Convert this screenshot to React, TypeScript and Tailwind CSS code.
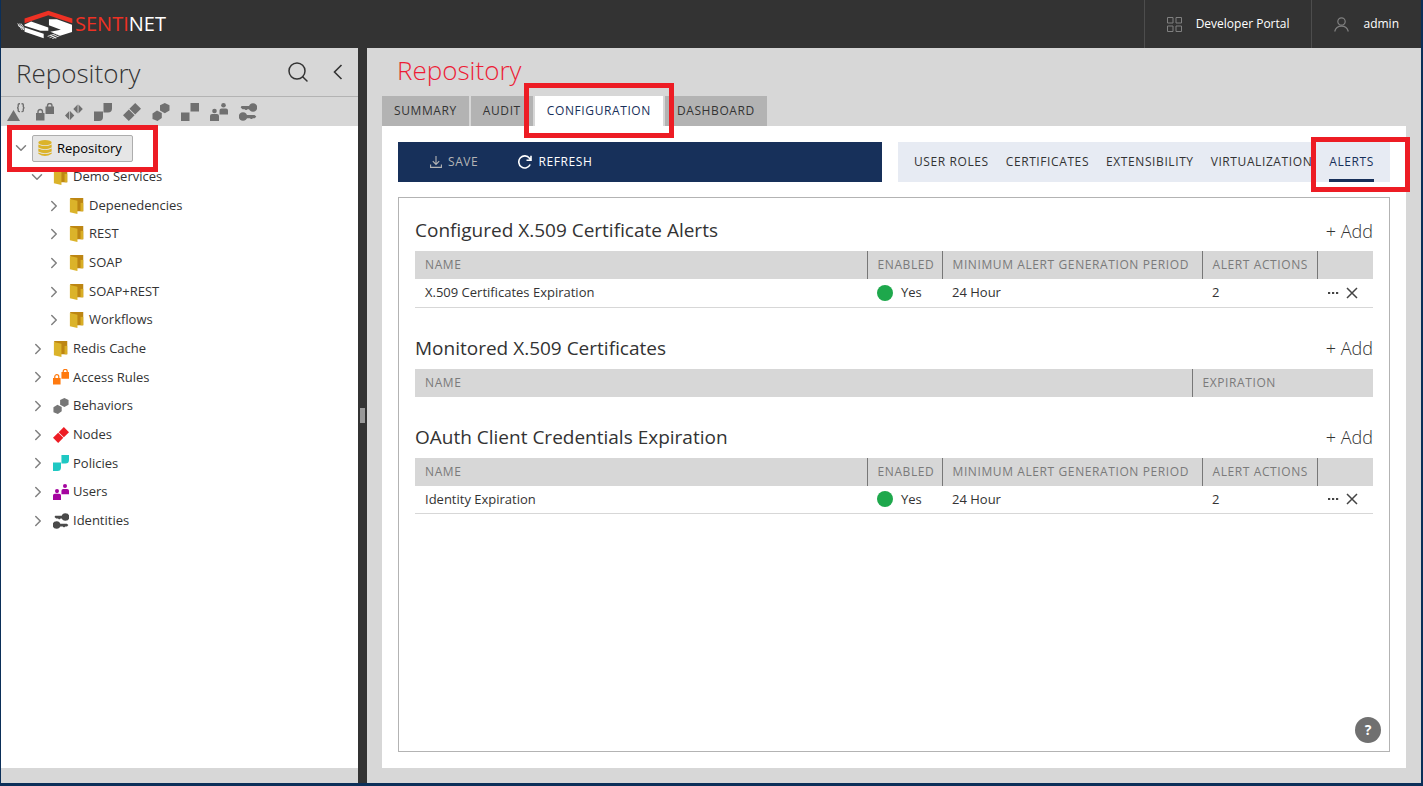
import type { ReactNode } from 'react'
import { ChevronDown, ChevronRight, Search } from 'lucide-react'

type IconName =
  | 'api'
  | 'locks'
  | 'arrows'
  | 'policies'
  | 'nodes'
  | 'behaviors'
  | 'squares'
  | 'users'
  | 'keys'
  | 'folder'
  | 'database'

const shapes: Record<IconName, ReactNode> = {
  api: (
    <>
      <path d="M0 18 6.5 7 13 18Z" />
      <path
        d="M13 .8h-.8q-1 0-1 1v1.7q0 1.2-1.2 1.2 1.2 0 1.2 1.2v1.7q0 1 1 1h.8M14.5.8h.8q1 0 1 1v1.7q0 1.2 1.2 1.2-1.2 0-1.2 1.2v1.7q0 1-1 1h-.8"
        fill="none"
        stroke="currentColor"
        strokeWidth="1.4"
      />
    </>
  ),
  locks: (
    <>
      <path d="M0 10h8.5v7.5H0zM9.5 3.5H18V11H9.5z" />
      <path
        d="M2 10.5V8.7a2.25 2.25 0 0 1 4.5 0v1.8M11.5 4V2.7a2.25 2.25 0 0 1 4.5 0V4"
        fill="none"
        stroke="currentColor"
        strokeWidth="1.4"
      />
    </>
  ),
  arrows: <path d="M0 12.5 4.3 8v9zM5 8l4.3 4.5L5 17zM8.3 6l4.3-4.5v9zM13.5 1.5 17.8 6l-4.3 4.5z" />,
  policies: <path d="M0 8.5h9V14q0 4-4 4H0zM9.5 0H18v5.5q0 4-4 4H9.5z" />,
  nodes: <path d="M5.8 6.4 11.6 12.2 5.8 18 0 12.2zM12.2 0 18 5.8 12.2 11.6 6.4 5.8z" />,
  behaviors: (
    <path d="m5 7.5 4.8 2.5v5L5.5 18l-5-2v-5.5zM12.800 0 17.500 2.300v5.200l-4.700 2.700L8 7.500V2.300z" />
  ),
  squares: <path d="M0 9.5h8.5V18H0zM9.5 0H18v8.5H9.5z" />,
  users: (
    <>
      <circle cx="4.5" cy="8" r="2.3" />
      <circle cx="13.5" cy="2.3" r="2.3" />
      <path d="M0 18v-5q0-2 2-2h5q2 0 2 2v5zM9.5 11.5v-4q0-2 2-2H16q2 0 2 2v4z" />
    </>
  ),
  keys: (
    <>
      <circle cx="14" cy="4.5" r="4.3" />
      <circle cx="4" cy="13.5" r="4.3" />
      <path d="M2.5 3H11v3.2H8.5L7.7 7H6.5l-.8-.8H3.5L1.7 4.6zM7 12h8.5l1.8 1.5-1.5 1.7h-2l-.8.8h-1.2l-.8-.8H7z" />
    </>
  ),
  folder: (
    <>
      <path d="M1 0h15v15H9z" fill="#bd8613" />
      <path d="M13 5.5h3V15h-3z" fill="#d9ae25" />
      <path d="M1 1 9.500 3v15L1 16z" fill="#dbb32a" />
    </>
  ),
  database: (
    <>
      <ellipse cx="9" cy="3" rx="7.5" ry="3" />
      <path d="M1.5 5q7.5 3.6 15 0v3.5q-7.5 3.6-15 0zM1.5 9.5q7.5 3.6 15 0V13q-7.5 3.6-15 0zM1.5 14q7.5 3.6 15 0v1.5q-7.5 5-15 0z" />
    </>
  ),
}

function Glyph({ name, className }: { name: IconName; className: string }) {
  return (
    <svg viewBox="0 0 18 18" fill="currentColor" className={`shrink-0 ${className}`} aria-hidden="true">
      {shapes[name]}
    </svg>
  )
}

function Logo() {
  return (
    <svg viewBox="0 0 168 88" className="h-[29px] w-14" aria-hidden="true">
      <path d="M22 26 94 2l73 24v14L94 16 22 40Z" fill="#ee3124" />
      <g fill="#fff">
        <path d="m22 44 20-9 52 18v10H70L22 48z" />
        <path d="m22 53 58 19v14L22 66z" />
        <path d="M96 28h24l46 17v22l-36 11-30-12 32-6-36-14z" />
      </g>
      <path
        d="m1 41 14 20M6 41l14 20M11 41l9 13M2 47l18 9M92 80l24-8M98 84l24-9M106 87l22-9M100 76l18 10"
        stroke="#fff"
        strokeWidth="2.5"
      />
    </svg>
  )
}

const toolbar: { name: IconName; label: string }[] = [
  { name: 'api', label: 'Add service' },
  { name: 'locks', label: 'Add access rule' },
  { name: 'arrows', label: 'Add version' },
  { name: 'policies', label: 'Add policy' },
  { name: 'nodes', label: 'Add node' },
  { name: 'behaviors', label: 'Add behavior' },
  { name: 'squares', label: 'Add group' },
  { name: 'users', label: 'Add user' },
  { name: 'keys', label: 'Add identity' },
]

type TreeNode = {
  label: string
  indent: string
  icon: IconName
  color: string
  open?: boolean
}

const tree: TreeNode[] = [
  { label: 'Demo Services', indent: 'pl-7', icon: 'folder', color: '', open: true },
  { label: 'Depenedencies', indent: 'pl-11', icon: 'folder', color: '' },
  { label: 'REST', indent: 'pl-11', icon: 'folder', color: '' },
  { label: 'SOAP', indent: 'pl-11', icon: 'folder', color: '' },
  { label: 'SOAP+REST', indent: 'pl-11', icon: 'folder', color: '' },
  { label: 'Workflows', indent: 'pl-11', icon: 'folder', color: '' },
  { label: 'Redis Cache', indent: 'pl-7', icon: 'folder', color: '' },
  { label: 'Access Rules', indent: 'pl-7', icon: 'locks', color: 'text-[#ff7a0f]' },
  { label: 'Behaviors', indent: 'pl-7', icon: 'behaviors', color: 'text-[#777777]' },
  { label: 'Nodes', indent: 'pl-7', icon: 'nodes', color: 'text-[#ed1c24]' },
  { label: 'Policies', indent: 'pl-7', icon: 'policies', color: 'text-[#1fc8c3]' },
  { label: 'Users', indent: 'pl-7', icon: 'users', color: 'text-[#a5059f]' },
  { label: 'Identities', indent: 'pl-7', icon: 'keys', color: 'text-[#4a4a4a]' },
]

function Sidebar() {
  return (
    <aside className="flex w-[357px] shrink-0 flex-col bg-[#d7d7d7]">
      <div className="flex h-[49px] items-center border-b border-[#b3b3b3] pr-[15px] pl-[15px]">
        <h2 className="flex-1 pt-0.5 text-[26px] font-light">Repository</h2>
        <button type="button" aria-label="Search" className="mr-[23px]">
          <Search size={24} strokeWidth={1.5} />
        </button>
        <button type="button" aria-label="Collapse">
          <svg viewBox="0 0 10 16" className="h-4 w-2.5" fill="none" stroke="currentColor" strokeWidth="1.6" aria-hidden="true">
            <path d="m8.5 1-7 7 7 7" />
          </svg>
        </button>
      </div>
      <div className="flex h-[29px] items-center gap-[11px] pl-1.5 text-[#707070]">
        {toolbar.map((item) => (
          <button key={item.name} type="button" aria-label={item.label}>
            <Glyph name={item.name} className="size-[18px]" />
          </button>
        ))}
      </div>
      <ul className="grid h-[409px] auto-rows-fr bg-white pt-2 text-[13px]">
        <li className="flex items-center pl-[11px]">
          <ChevronDown size={18} strokeWidth={2} className="mr-0.5 text-[#808080]" />
          <div className="relative">
            <button
              type="button"
              className="flex h-[27px] items-center gap-1 rounded-xs border border-[#adadad] bg-[#e6e6e6] pr-2.5 pl-1 text-black"
            >
              <Glyph name="database" className="size-4 text-[#dbb32a]" />
              Repository
            </button>
            <div className="pointer-events-none absolute -inset-x-[25px] -inset-y-2.5 z-10 border-[5px] border-[#ed1c24]" />
          </div>
        </li>
        {tree.map((node) => (
          <li key={node.label} className={`flex items-center ${node.indent}`}>
            {node.open ? (
              <ChevronDown size={18} strokeWidth={2} className="-mx-px text-[#808080]" />
            ) : (
              <ChevronRight size={18} strokeWidth={2} className="-mr-0.5 text-[#808080]" />
            )}
            <a href="#" className="ml-2 flex items-center gap-1">
              <Glyph name={node.icon} className={`size-4 ${node.color}`} />
              {node.label}
            </a>
          </li>
        ))}
      </ul>
      <div className="flex-1 bg-white" />
      <div className="h-[15px]" />
    </aside>
  )
}

function Splitter() {
  return (
    <div className="flex w-[9px] shrink-0 items-center justify-center bg-[#333333]">
      <div className="h-[15px] w-[5px] bg-[#999999]" />
    </div>
  )
}

function SectionTitle({ children }: { children: ReactNode }) {
  return (
    <div className="flex items-center justify-between py-1.5 leading-[29px]">
      <h2 className="text-[19px]">{children}</h2>
      <button type="button" className="text-lg font-light">
        + Add
      </button>
    </div>
  )
}

const headCell = 'h-7 border-l border-[#777777] px-2.5 text-left font-normal first:border-l-0'

function AlertTable({ name }: { name: string }) {
  return (
    <table className="w-full table-fixed text-[13px]">
      <thead className="bg-[#d7d7d7] text-xs tracking-wider text-[#7a7a7a]">
        <tr>
          <th className={headCell}>NAME</th>
          <th className={`${headCell} w-[75px]`}>ENABLED</th>
          <th className={`${headCell} w-[260px] whitespace-nowrap`}>MINIMUM ALERT GENERATION PERIOD</th>
          <th className={`${headCell} w-[115px] whitespace-nowrap`}>ALERT ACTIONS</th>
          <th className={`${headCell} w-14`} aria-label="Actions" />
        </tr>
      </thead>
      <tbody>
        <tr className="border-b border-[#d7d7d7]">
          <td className="h-7 px-2.5">{name}</td>
          <td className="px-2.5">
            <span className="flex items-center gap-2">
              <span className="size-4 rounded-full bg-[#1ea84c]" />
              Yes
            </span>
          </td>
          <td className="px-2.5">24 Hour</td>
          <td className="px-2.5">2</td>
          <td className="px-2.5">
            <span className="flex items-center gap-[7px]">
              <button type="button" aria-label="Edit">
                <svg viewBox="0 0 12 12" className="size-3" fill="#444444" aria-hidden="true">
                  <path d="M1 5h2.2v2H1zM5 5h2.2v2H5zM9 5h2.2v2H9z" />
                </svg>
              </button>
              <button type="button" aria-label="Delete">
                <svg viewBox="0 0 12 12" className="size-3" stroke="#444444" strokeWidth="1.5" aria-hidden="true">
                  <path d="m1 1 10 10M11 1 1 11" />
                </svg>
              </button>
            </span>
          </td>
        </tr>
      </tbody>
    </table>
  )
}

function MonitoredTable() {
  return (
    <table className="w-full table-fixed">
      <thead className="bg-[#d7d7d7] text-xs tracking-wider text-[#7a7a7a]">
        <tr>
          <th className={headCell}>NAME</th>
          <th className={`${headCell} w-[181px]`}>EXPIRATION</th>
        </tr>
      </thead>
    </table>
  )
}

const subTabs = ['USER ROLES', 'CERTIFICATES', 'EXTENSIBILITY', 'VIRTUALIZATION']

function Main() {
  return (
    <main className="flex min-w-0 flex-1 flex-col bg-[#d7d7d7] px-[15px] pb-[15px]">
      <h1 className="h-12 pl-[15px] text-[26px] leading-[45px] font-light text-[#ed1c35]">Repository</h1>
      <nav className="flex h-[30px] gap-0.5 text-xs tracking-wider">
        <button type="button" className="bg-[#b3b3b3] px-3">
          SUMMARY
        </button>
        <button type="button" className="bg-[#b3b3b3] px-3">
          AUDIT
        </button>
        <div className="relative flex">
          <button type="button" className="bg-white px-3 text-[#17305a]">
            CONFIGURATION
          </button>
          <div className="pointer-events-none absolute -inset-x-[11px] -top-[13px] -bottom-3 z-10 border-[5px] border-[#ed1c24]" />
        </div>
        <button type="button" className="bg-[#b3b3b3] px-3">
          DASHBOARD
        </button>
      </nav>
      <div className="flex flex-1 flex-col gap-[15px] bg-white p-4">
        <div className="flex h-10 gap-4 text-xs tracking-wider">
          <div className="flex flex-1 items-center gap-10 bg-[#17305a] pl-8 text-white">
            <button type="button" className="flex items-center gap-1.5 text-[#b5b5b5]">
              <svg viewBox="0 0 12 12" className="size-3" fill="none" stroke="currentColor" strokeWidth="1.1" aria-hidden="true">
                <path d="M6 0v8M2.8 5.2 6 8.4l3.2-3.2M.6 8.5v2.9h10.8V8.5" />
              </svg>
              SAVE
            </button>
            <button type="button" className="flex items-center gap-1.5 font-medium">
              <svg viewBox="0 0 14 14" className="size-3.5" fill="none" stroke="currentColor" strokeWidth="1.6" aria-hidden="true">
                <path d="M12.2 9.5A6 6 0 1 1 11.5 3.2L12.8 4.8M13 .8v4.4H8.5" />
              </svg>
              REFRESH
            </button>
          </div>
          <nav className="flex w-[492px] shrink-0 justify-between bg-[#e7ebf3] px-4 whitespace-nowrap">
            {subTabs.map((tab) => (
              <button key={tab} type="button">
                {tab}
              </button>
            ))}
            <div className="relative flex">
              <button type="button" className="border-y-[3px] border-t-transparent border-b-[#17305a] text-[#17305a]">
                ALERTS
              </button>
              <div className="pointer-events-none absolute -top-[5px] -right-9 -bottom-2.5 -left-[18px] z-10 border-[5px] border-[#ed1c24]" />
            </div>
          </nav>
        </div>
        <div className="relative flex flex-1 flex-col gap-5 border border-[#b3b3b3] px-4 pt-3">
          <section>
            <SectionTitle>Configured X.509 Certificate Alerts</SectionTitle>
            <AlertTable name="X.509 Certificates Expiration" />
          </section>
          <section>
            <SectionTitle>Monitored X.509 Certificates</SectionTitle>
            <MonitoredTable />
          </section>
          <section>
            <SectionTitle>OAuth Client Credentials Expiration</SectionTitle>
            <AlertTable name="Identity Expiration" />
          </section>
          <button
            type="button"
            className="absolute right-2 bottom-2 size-[26px] rounded-full bg-[#707070] text-sm font-bold text-white"
          >
            ?
          </button>
        </div>
      </div>
    </main>
  )
}

export default function App() {
  return (
    <div className="flex h-screen flex-col border-r-2 border-b-[3px] border-l border-[#0b2f59] font-['Open_Sans',sans-serif] text-[#333333]">
      <header className="flex h-12 shrink-0 items-center justify-between bg-[#333333] text-xs text-white">
        <div className="flex items-center pl-4">
          <Logo />
          <span className="ml-0.5 text-xl">
            <span className="text-[#ee3124]">SENTI</span>NET
          </span>
        </div>
        <div className="flex h-full">
          <a href="#" className="flex items-center gap-3.5 border-l border-[#4d4d4d] px-[22px]">
            <svg viewBox="0 0 15 15" className="size-[15px]" fill="none" stroke="#808080" aria-hidden="true">
              <path d="M.5.5H6V6H.5zM9 .5h5.5V6H9zM.5 9H6v5.5H.5zM9 9h5.5v5.5H9z" />
            </svg>
            Developer Portal
          </a>
          <a href="#" className="flex items-center gap-3.5 border-l border-[#4d4d4d] px-[22px]">
            <svg viewBox="0 0 15 15" className="size-[15px]" fill="none" stroke="#808080" strokeWidth="1.2" aria-hidden="true">
              <circle cx="7.5" cy="4.5" r="3.7" />
              <path d="M.7 14.5a7 7 0 0 1 13.6 0" />
            </svg>
            admin
          </a>
        </div>
      </header>
      <div className="flex min-h-0 flex-1">
        <Sidebar />
        <Splitter />
        <Main />
      </div>
    </div>
  )
}
